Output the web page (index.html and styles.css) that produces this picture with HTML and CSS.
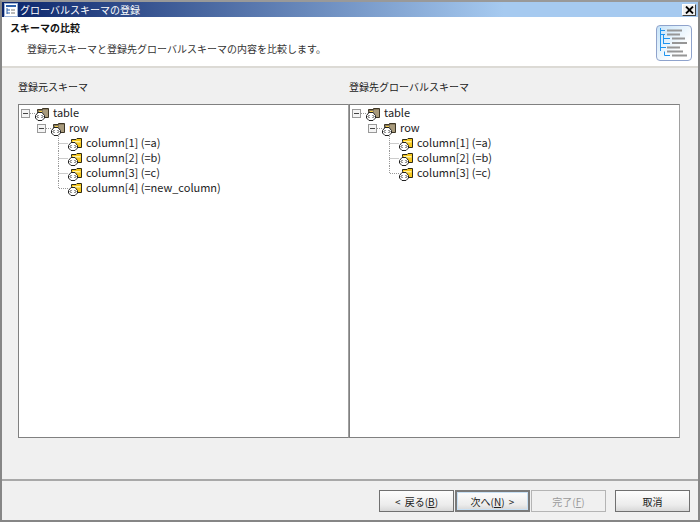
FILE: index.html
```html
<!DOCTYPE html>
<html lang="ja">
<head>
  <meta charset="UTF-8">
  <title>グローバルスキーマの登録</title>
  <link rel="stylesheet" href="styles.css">
</head>
<body>

<!-- shared tree icons -->
<svg class="defs" width="0" height="0">
  <symbol id="element" viewBox="0 0 14 13">
    <path d="M2.500 3.500V1.500H7.500V.5H13.500V9.500H2.500Z" fill="#8a7d62" stroke="#3d3524"/>
    <path d="M4 3H7V5H4Z" fill="#f6d04a"/>
    <path d="M8 2H13V9H8Z" fill="#a89a7c"/>
    <path d="M.5 7.500L3 4.500H7L9.500 7.500V10L7 12.500H3L.5 10Z" fill="#fff" stroke="#222"/>
    <path d="M3.500 7L2 8.500L3.500 10M6.500 7L8 8.500L6.500 10" fill="none" stroke="#333"/>
  </symbol>
  <symbol id="column" viewBox="0 0 14 13">
    <path d="M3.500 3.500V1.500H8L9 .5H13.500V9.500H3.500Z" fill="#f8c81e" stroke="#2e2a14"/>
    <path d="M5 3H12.500V4.500H5Z" fill="#fff2a0"/>
    <path d="M.5 7.500L3 4.500H7L9.500 7.500V10L7 12.500H3L.5 10Z" fill="#fff" stroke="#222"/>
    <path d="M3.500 7L2 8.500L3.500 10M6.500 7L8 8.500L6.500 10" fill="none" stroke="#333"/>
  </symbol>
  <symbol id="minus" viewBox="0 0 9 9">
    <rect x=".5" y=".5" width="8" height="8" fill="#f4f4f4" stroke="#999"/>
    <path d="M2 4.500H7" stroke="#444"/>
  </symbol>
  <symbol id="elbow" viewBox="0 0 14 15">
    <path d="M4.500 0V7.500H14" fill="none" stroke="#999" stroke-dasharray="1 1"/>
  </symbol>
  <symbol id="branch" viewBox="0 0 14 15">
    <path d="M4.500 0V15M4.500 7.500H14" fill="none" stroke="#999" stroke-dasharray="1 1"/>
  </symbol>
  <symbol id="stub" viewBox="0 0 5 15">
    <path d="M0 7.500H5" fill="none" stroke="#999" stroke-dasharray="1 1"/>
  </symbol>
</svg>

<div class="window">

  <div class="titlebar">
    <svg class="app-icon" width="14" height="14" viewBox="0 0 14 14">
      <rect x=".5" y=".5" width="13" height="13" fill="#fff" stroke="#9db4d8"/>
      <rect x="2" y="2" width="10" height="2" fill="#2f62ac"/>
      <path d="M3 5V11M3 7H6M3 10H6" fill="none" stroke="#2f62ac"/>
      <path d="M7 7H11M7 10H11" stroke="#777"/>
    </svg>
    <span class="title-text">グローバルスキーマの登録</span>
    <button class="close-button">
      <svg width="9" height="8" viewBox="0 0 9 8">
        <path d="M1 .5L8 7.500M8 .5L1 7.500" stroke="#000" stroke-width="1.800"/>
      </svg>
    </button>
  </div>

  <div class="page-header">
    <div class="header-text">
      <h1>スキーマの比較</h1>
      <p>登録元スキーマと登録先グローバルスキーマの内容を比較します。</p>
    </div>
    <div class="wizard-icon">
      <svg width="32" height="32" viewBox="0 0 32 32">
        <path d="M2.500 1V24M2.500 3.500H7M2.500 7.500H7M5.500 7.500V17M5.500 11.500H12M5.500 16.500H12M2.500 20.500H8M6.500 24.500V28.500H12" fill="none" stroke="#1e94f0"/>
        <path d="M9 3.500H24M9 7.500H22M14 11.500H27M14 16H29M9 20.500H22M9 24.500H25M14 28.500H29" fill="none" stroke="#969696" stroke-width="2"/>
      </svg>
    </div>
  </div>

  <div class="content">
    <div class="pane-labels">
      <span>登録元スキーマ</span>
      <span>登録先グローバルスキーマ</span>
    </div>
    <div class="panes">

      <div class="tree-pane">
        <ul class="tree">
          <li class="depth-0">
            <svg class="expander"><use href="#minus"/></svg>
            <svg class="stub"><use href="#stub"/></svg>
            <svg class="node"><use href="#element"/></svg>
            <span>table</span>
          </li>
          <li class="depth-1">
            <svg class="expander"><use href="#minus"/></svg>
            <svg class="stub"><use href="#stub"/></svg>
            <svg class="node"><use href="#element"/></svg>
            <span>row</span>
          </li>
          <li class="depth-2">
            <svg class="line"><use href="#branch"/></svg>
            <svg class="node"><use href="#column"/></svg>
            <span>column[1] (=a)</span>
          </li>
          <li class="depth-2">
            <svg class="line"><use href="#branch"/></svg>
            <svg class="node"><use href="#column"/></svg>
            <span>column[2] (=b)</span>
          </li>
          <li class="depth-2">
            <svg class="line"><use href="#branch"/></svg>
            <svg class="node"><use href="#column"/></svg>
            <span>column[3] (=c)</span>
          </li>
          <li class="depth-2">
            <svg class="line"><use href="#elbow"/></svg>
            <svg class="node"><use href="#column"/></svg>
            <span>column[4] (=new_column)</span>
          </li>
        </ul>
      </div>

      <div class="tree-pane">
        <ul class="tree">
          <li class="depth-0">
            <svg class="expander"><use href="#minus"/></svg>
            <svg class="stub"><use href="#stub"/></svg>
            <svg class="node"><use href="#element"/></svg>
            <span>table</span>
          </li>
          <li class="depth-1">
            <svg class="expander"><use href="#minus"/></svg>
            <svg class="stub"><use href="#stub"/></svg>
            <svg class="node"><use href="#element"/></svg>
            <span>row</span>
          </li>
          <li class="depth-2">
            <svg class="line"><use href="#branch"/></svg>
            <svg class="node"><use href="#column"/></svg>
            <span>column[1] (=a)</span>
          </li>
          <li class="depth-2">
            <svg class="line"><use href="#branch"/></svg>
            <svg class="node"><use href="#column"/></svg>
            <span>column[2] (=b)</span>
          </li>
          <li class="depth-2">
            <svg class="line"><use href="#elbow"/></svg>
            <svg class="node"><use href="#column"/></svg>
            <span>column[3] (=c)</span>
          </li>
        </ul>
      </div>

    </div>
  </div>

  <div class="footer">
    <button class="nav-button back"><span>&lt; 戻る(<u>B</u>)</span></button>
    <button class="nav-button next"><span>次へ(<u>N</u>) &gt;</span></button>
    <button class="nav-button finish" disabled><span>完了(<u>F</u>)</span></button>
    <button class="nav-button cancel"><span>取消</span></button>
  </div>

</div>

</body>
</html>
```

FILE: styles.css
```css
html, body {
  margin: 0;
  padding: 0;
}

body {
  width: 700px;
  height: 522px;
  overflow: hidden;
  font-family: "Noto Sans CJK JP", "Liberation Sans", sans-serif;
  font-size: 10px;
  color: #222;
}

.defs {
  display: block;
  height: 0;
}

.window {
  box-sizing: border-box;
  width: 700px;
  height: 522px;
  display: flex;
  flex-direction: column;
  background-color: #f0f0f0;
  border: 2px solid #868686;
  border-top-color: #999;
}

.titlebar {
  height: 15px;
  flex: none;
  display: flex;
  align-items: center;
  background: linear-gradient(to right, #0a246a, #a6caf0 72%);
  color: #fff;
  font-size: 10px;
}

.app-icon {
  margin-left: 2px;
  flex: none;
}

.title-text {
  margin-left: 2px;
  line-height: 15px;
}

.close-button {
  margin-left: auto;
  margin-right: 2px;
  width: 14px;
  height: 12px;
  padding: 0;
  display: flex;
  align-items: center;
  justify-content: center;
  background-color: #f0f0f0;
  border: 1px solid;
  border-color: #fff #404040 #404040 #fff;
}

.page-header {
  height: 51px;
  flex: none;
  box-sizing: border-box;
  display: flex;
  justify-content: space-between;
  background-color: #ffffff;
  border-bottom: 2px solid #dcdad5;
}

.header-text {
  padding: 3px 0 0 8px;
}

h1 {
  margin: 0;
  font-size: 10px;
  line-height: 16px;
  font-weight: bold;
  color: #111;
}

p {
  margin: 5px 0 0 17px;
  font-size: 10px;
  line-height: 16px;
  color: #333;
}

.wizard-icon {
  box-sizing: border-box;
  width: 36px;
  height: 36px;
  margin: 8px 6px 0 0;
  padding: 1px;
  border: 1px solid #8fa3cc;
  border-radius: 4px;
  background: linear-gradient(135deg, #c4e2f8, #ffffff 70%);
}

.content {
  flex: 1;
  display: flex;
  flex-direction: column;
  padding: 11px 18px 41px 16px;
  min-height: 0;
  border-bottom: 2px solid #a8a8a8;
}

.pane-labels {
  display: flex;
  height: 25px;
  line-height: 16px;
}

.pane-labels span {
  width: 332px;
}

.panes {
  flex: 1;
  display: flex;
  min-height: 0;
}

.tree-pane {
  box-sizing: border-box;
  flex: 1;
  background-color: #ffffff;
  border: 1px solid;
  border-color: #808080 #a0a0a0 #808080 #808080;
}

.tree {
  list-style: none;
  margin: 0;
  padding: 1px 0 0 2px;
  font-size: 11px;
}

.tree li {
  display: flex;
  align-items: center;
  height: 15px;
}

.depth-1 {
  padding-left: 16px;
}

.depth-2 {
  padding-left: 33px;
}

.expander {
  width: 9px;
  height: 9px;
  flex: none;
}

.stub {
  width: 5px;
  height: 15px;
  flex: none;
}

.line {
  width: 14px;
  height: 15px;
  flex: none;
}

.node {
  width: 14px;
  height: 13px;
  margin-top: 2px;
  flex: none;
}

.tree span {
  margin: 0 0 4px 4px;
  white-space: nowrap;
}

.footer {
  height: 39px;
  flex: none;
  box-sizing: border-box;
  display: flex;
  padding: 9px 8px 0 377px;
}

.nav-button {
  box-sizing: border-box;
  width: 75px;
  height: 22px;
  padding: 0;
  font-family: inherit;
  font-size: 10px;
  word-spacing: 2px;
  color: #222;
  background: linear-gradient(to bottom, #fdfdfd, #ececec 70%, #d8d8d8);
  border: 1px solid #707070;
}

.next {
  margin-left: 1px;
  border: 2px solid #7a7a7a;
  box-shadow: inset 0 0 0 1px #c8e0f4;
}

.finish {
  margin-left: 1px;
  color: #9a9a9a;
  background: #f0f0f0;
  border-color: #b4b4b4;
}

.cancel {
  margin-left: 9px;
}
```
